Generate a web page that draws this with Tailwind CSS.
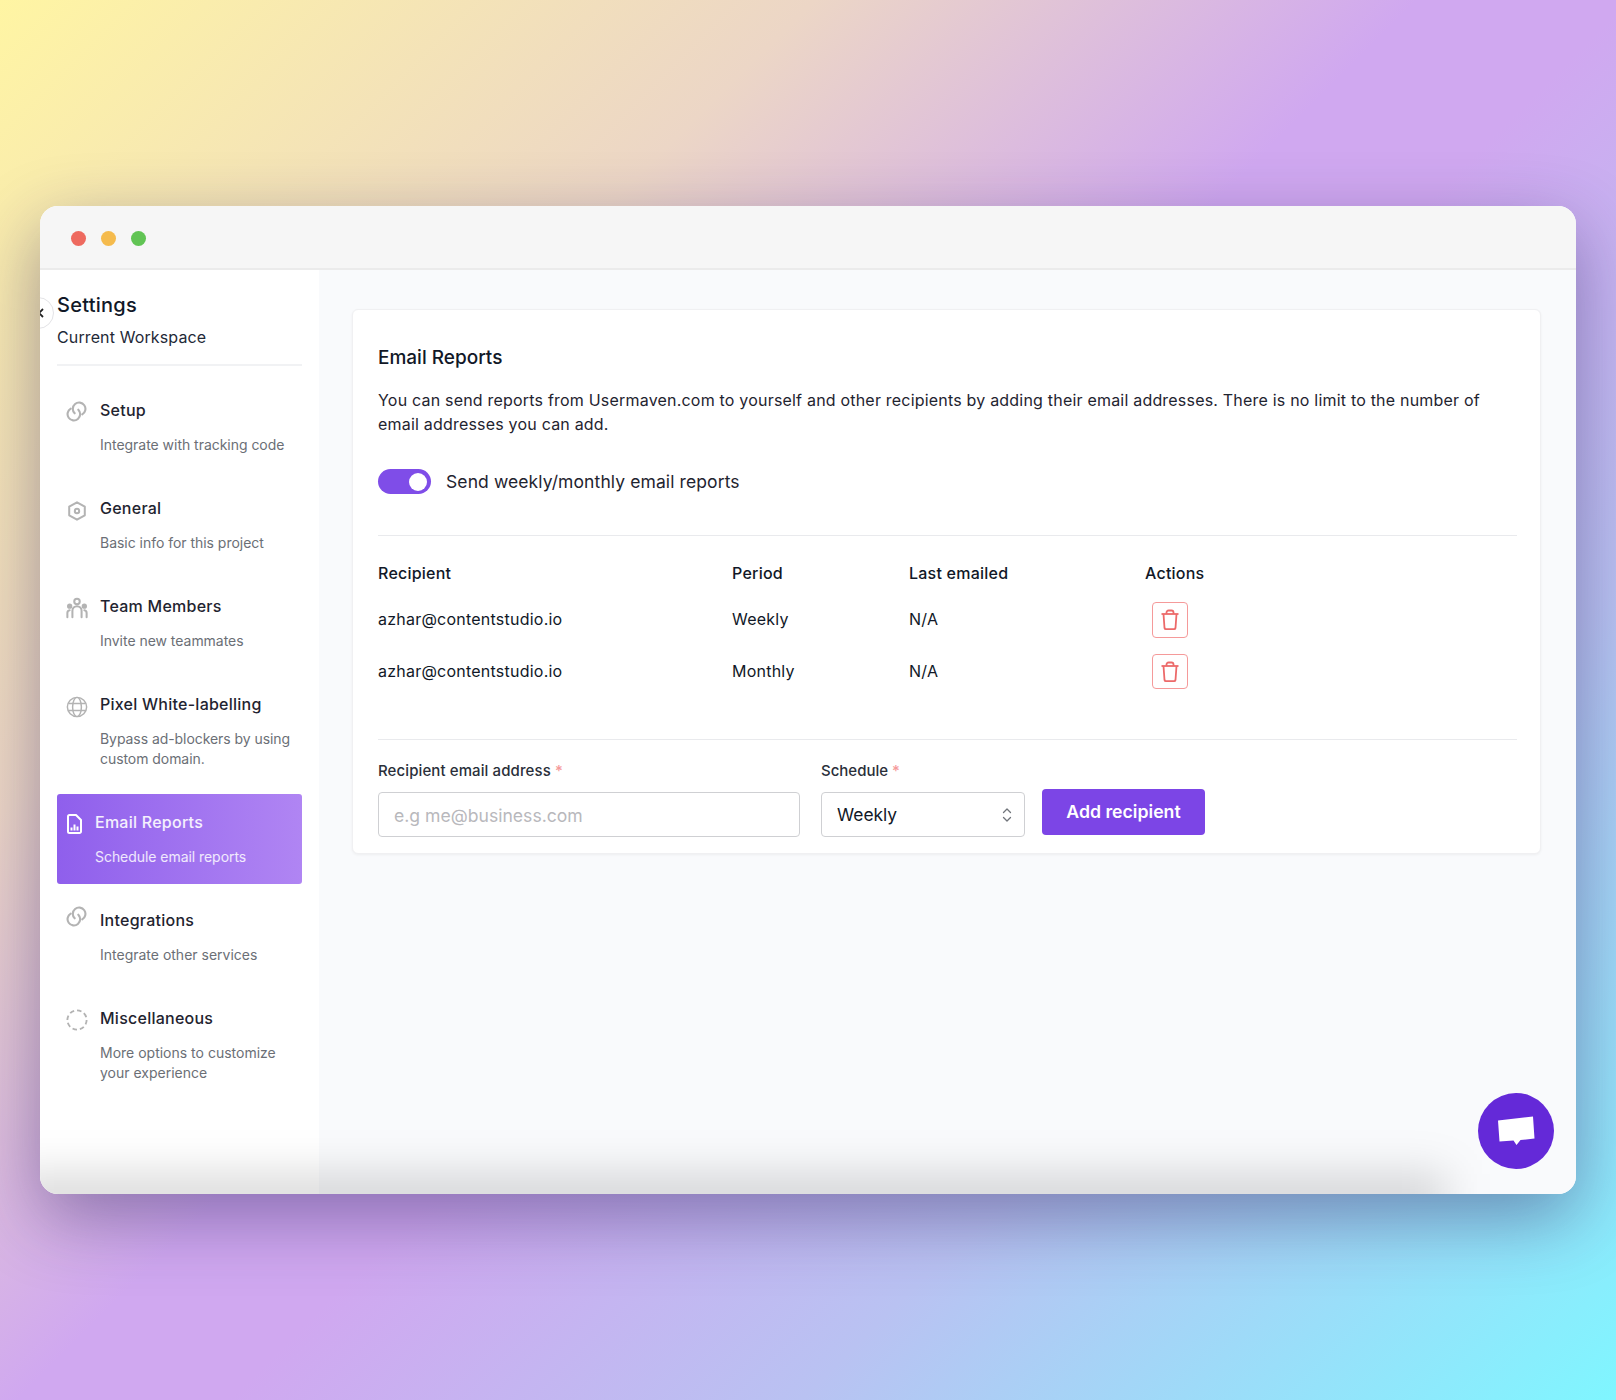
<!DOCTYPE html>
<html lang="en">
<head>
    <meta charset="UTF-8">
    <title>Settings - Email Reports</title>
    <script src="https://cdn.jsdelivr.net/npm/@tailwindcss/browser@4"></script>
</head>
<body class="font-['Inter',sans-serif] text-[#111827]">
    <div class="w-[1616px] h-[1400px] px-[40px] pt-[206px] bg-[linear-gradient(135deg,#fff5a3_0%,#ecd6c6_27%,#d0a8f0_47%,#d0a8f0_54%,#b9c2f2_73%,#7ff6ff_100%)]">
        <!-- window -->
        <div class="relative w-[1536px] h-[988px] rounded-[18px] overflow-hidden bg-white shadow-[0_24px_70px_rgba(40,30,90,0.42)] flex flex-col">
            <div class="h-[64px] shrink-0 bg-[#f6f6f6] border-b-2 border-[#ebebeb] flex items-center gap-[15px] pl-[31px] pt-[2px]">
                <span class="w-[15px] h-[15px] rounded-full bg-[#ee6a5f]"></span>
                <span class="w-[15px] h-[15px] rounded-full bg-[#f5bb4d]"></span>
                <span class="w-[15px] h-[15px] rounded-full bg-[#61c454]"></span>
            </div>

            <div class="flex flex-1">
                <!-- sidebar -->
                <aside class="w-[279px] shrink-0 bg-white pl-[17px] pr-[17px] pt-[21px]">
                    <h1 class="text-[20px] leading-[28px] font-medium tracking-[0.25px]">Settings</h1>
                    <p class="text-[16px] leading-[24px] mt-[6px] text-[#1f2937] tracking-[0.12px]">Current Workspace</p>
                    <div class="h-[2px] bg-[#f1f2f4] mt-[15px] mb-[16px]"></div>

                    <div class="flex flex-col gap-[8px]">
                        <div class="flex pl-[9px] pt-[16px] pb-[17px] rounded-[3px]">
                            <svg class="w-[21px] h-[21px] mt-[3px] shrink-0 text-[#b3b3b3]" viewBox="0 0 20 20" fill="none" stroke="currentColor" stroke-width="2" stroke-linecap="round"><path d="M8.260 11.740A6 6 0 1 1 15.500 12.700"/><path d="M11.740 8.260A6 6 0 1 1 4.500 7.300"/></svg>
                            <div class="ml-[13px]">
                                <div class="text-[16px] leading-[24px] font-medium text-[#1f2430] tracking-[0.25px]">Setup</div>
                                <div class="text-[14px] leading-[20px] mt-[13px] text-[#6b6f76] font-normal tracking-[-0.03px]">Integrate with tracking code</div>
                            </div>
                        </div>
                        <div class="flex pl-[9px] pt-[16px] pb-[17px] rounded-[3px]">
                            <svg class="w-[22px] h-[22px] mt-[4px] shrink-0 text-[#b3b3b3]" viewBox="0 0 24 24" fill="none" stroke="currentColor" stroke-width="2.200" stroke-linejoin="round"><path d="M12 2.500l8.500 4.800v9.400L12 21.500l-8.500-4.800V7.300z"/><circle cx="12" cy="12" r="2.400"/></svg>
                            <div class="ml-[12px]">
                                <div class="text-[16px] leading-[24px] font-medium text-[#1f2430] tracking-[0.25px]">General</div>
                                <div class="text-[14px] leading-[20px] mt-[13px] text-[#6b6f76] tracking-[-0.03px]">Basic info for this project</div>
                            </div>
                        </div>
                        <div class="flex pl-[9px] pt-[16px] pb-[17px] rounded-[3px]">
                            <svg class="w-[22px] h-[22px] mt-[3px] shrink-0 text-[#b3b3b3]" viewBox="0 0 24 24" fill="none" stroke="currentColor" stroke-width="2.200" stroke-linecap="round"><circle cx="12" cy="5" r="3"/><circle cx="4" cy="10" r="1.800" fill="currentColor"/><circle cx="20" cy="10" r="1.800" fill="currentColor"/><path d="M7 22v-7a5 5 0 0 1 10 0v7"/><path d="M1.500 22v-4.500a3 3 0 0 1 2.500-3"/><path d="M22.500 22v-4.500a3 3 0 0 0-2.500-3"/></svg>
                            <div class="ml-[12px]">
                                <div class="text-[16px] leading-[24px] font-medium text-[#1f2430] tracking-[0.25px]">Team Members</div>
                                <div class="text-[14px] leading-[20px] mt-[13px] text-[#6b6f76] tracking-[-0.03px]">Invite new teammates</div>
                            </div>
                        </div>
                        <div class="flex pl-[9px] pt-[16px] pb-[17px] rounded-[3px]">
                            <svg class="w-[22px] h-[22px] mt-[4px] shrink-0 text-[#b3b3b3]" viewBox="0 0 24 24" fill="none" stroke="currentColor" stroke-width="1.600"><circle cx="12" cy="12" r="10.500"/><ellipse cx="12" cy="12" rx="4.800" ry="10.500"/><path d="M2.500 8.200h19M2.500 15.800h19"/></svg>
                            <div class="ml-[12px]">
                                <div class="text-[16px] leading-[24px] font-medium text-[#1f2430] tracking-[0.25px]">Pixel White-labelling</div>
                                <div class="text-[14px] leading-[20px] mt-[13px] text-[#6b6f76] tracking-[-0.06px]">Bypass ad-blockers by using custom domain.</div>
                            </div>
                        </div>
                        <div class="flex pl-[10px] pt-[16px] pb-[17px] rounded-[3px] bg-[linear-gradient(90deg,#8f5fec,#b085f3)]">
                            <svg class="w-[15px] h-[20px] mt-[4px] shrink-0 text-white" viewBox="0 0 15 20" fill="none"><path d="M2.500 1h6.500l5 5v11.500a1.500 1.500 0 0 1-1.500 1.500h-10A1.500 1.500 0 0 1 1 17.500v-15A1.500 1.500 0 0 1 2.500 1z" stroke="currentColor" stroke-width="2" stroke-linejoin="round"/><path d="M4.500 16.500v-3M7.500 16.500v-6M10.500 16.500v-4" stroke="currentColor" stroke-width="2"/></svg>
                            <div class="ml-[13px]">
                                <div class="text-[16px] leading-[24px] font-medium text-white/90 tracking-[0.25px]">Email Reports</div>
                                <div class="text-[14px] leading-[20px] mt-[13px] text-white/85 tracking-[-0.05px]">Schedule email reports</div>
                            </div>
                        </div>
                        <div class="flex pl-[9px] pt-[16px] pb-[17px] rounded-[3px]">
                            <svg class="w-[21px] h-[21px] mt-[-2px] shrink-0 text-[#b3b3b3]" viewBox="0 0 20 20" fill="none" stroke="currentColor" stroke-width="2" stroke-linecap="round"><path d="M8.260 11.740A6 6 0 1 1 15.500 12.700"/><path d="M11.740 8.260A6 6 0 1 1 4.500 7.300"/></svg>
                            <div class="ml-[13px]">
                                <div class="text-[16px] leading-[24px] font-medium text-[#1f2430] tracking-[0.25px]">Integrations</div>
                                <div class="text-[14px] leading-[20px] mt-[13px] text-[#6b6f76]">Integrate other services</div>
                            </div>
                        </div>
                        <div class="flex pl-[9px] pt-[16px] pb-[17px] rounded-[3px]">
                            <svg class="w-[22px] h-[22px] mt-[3px] shrink-0 text-[#b3b3b3]" viewBox="0 0 24 24" fill="none" stroke="currentColor" stroke-width="2" stroke-dasharray="5 3.200"><circle cx="12" cy="12" r="10.500"/></svg>
                            <div class="ml-[12px]">
                                <div class="text-[16px] leading-[24px] font-medium text-[#1f2430] tracking-[0.25px]">Miscellaneous</div>
                                <div class="text-[14px] leading-[20px] mt-[13px] text-[#6b6f76]">More options to customize your experience</div>
                            </div>
                        </div>
                    </div>
                </aside>

                <!-- main -->
                <main class="flex-1 bg-[#f9fafc] pl-[33px] pr-[35px] pt-[39px]">
                    <div class="bg-white rounded-[6px] border border-[#f0f0f2] shadow-[0_1px_3px_rgba(0,0,0,0.05)] pl-[25px] pr-[23px] pt-[34px] pb-[16px]">
                        <h2 class="text-[19px] leading-[28px] font-medium">Email Reports</h2>
                        <p class="text-[16px] leading-[24px] mt-[16px] text-[#1f2430] tracking-[0.2px]">You can send reports from Usermaven.com to yourself and other recipients by adding their email addresses. There is no limit to the number of email addresses you can add.</p>

                        <div class="flex items-center mt-[33px]">
                            <div class="w-[53px] h-[25px] rounded-full bg-[#7f4de8] flex items-center justify-end pr-[4px]">
                                <span class="w-[18px] h-[18px] rounded-full bg-white"></span>
                            </div>
                            <span class="ml-[15px] text-[17.5px] leading-[24px] text-[#1f2430] tracking-[0.1px]">Send weekly/monthly email reports</span>
                        </div>

                        <div class="h-px bg-[#e9eaed] mt-[41px]"></div>

                        <div class="grid grid-cols-[354px_177px_236px_1fr] items-center mt-[25px] text-[16px] leading-[24px] text-[#111827] tracking-[0.23px]">
                            <div class="font-medium">Recipient</div>
                            <div class="font-medium">Period</div>
                            <div class="font-medium">Last emailed</div>
                            <div class="font-medium">Actions</div>

                            <div class="mt-[17px] pb-[2px]">azhar@contentstudio.io</div>
                            <div class="mt-[17px] pb-[2px]">Weekly</div>
                            <div class="mt-[17px] pb-[2px]">N/A</div>
                            <div class="mt-[17px]">
                                <button class="w-[36px] h-[36px] ml-[7px] rounded-[4px] border border-[#f59a9a] flex items-center justify-center text-[#ec6a6a]">
                                    <svg class="w-[20px] h-[22px]" viewBox="0 0 20 22" fill="none" stroke="currentColor" stroke-width="1.800" stroke-linejoin="round"><path d="M1.500 5h17"/><path d="M6.500 5V3.500a2 2 0 0 1 2-2h3a2 2 0 0 1 2 2V5"/><path d="M3.500 5l1 14a1.500 1.500 0 0 0 1.500 1.200h8a1.500 1.500 0 0 0 1.500-1.200l1-14"/></svg>
                                </button>
                            </div>

                            <div class="mt-[16px] pb-[2px]">azhar@contentstudio.io</div>
                            <div class="mt-[16px] pb-[2px]">Monthly</div>
                            <div class="mt-[16px] pb-[2px]">N/A</div>
                            <div class="mt-[16px]">
                                <button class="w-[36px] h-[35px] ml-[7px] rounded-[4px] border border-[#f59a9a] flex items-center justify-center text-[#ec6a6a]">
                                    <svg class="w-[20px] h-[22px]" viewBox="0 0 20 22" fill="none" stroke="currentColor" stroke-width="1.800" stroke-linejoin="round"><path d="M1.500 5h17"/><path d="M6.500 5V3.500a2 2 0 0 1 2-2h3a2 2 0 0 1 2 2V5"/><path d="M3.500 5l1 14a1.500 1.500 0 0 0 1.500 1.200h8a1.500 1.500 0 0 0 1.500-1.200l1-14"/></svg>
                                </button>
                            </div>
                        </div>

                        <div class="h-px bg-[#e9eaed] mt-[50px]"></div>

                        <div class="flex items-end mt-[21px]">
                            <div class="w-[422px]">
                                <label class="block text-[15px] leading-[20px] font-medium text-[#2a2f3a] tracking-[0.1px]">Recipient email address <span class="text-[#f59a9a]">*</span></label>
                                <input type="text" placeholder="e.g me@business.com" class="mt-[11px] w-full h-[45px] pl-[15px] pr-[15px] pt-[2px] text-[17.6px] bg-white border border-[#cfd0d3] rounded-[4px] placeholder:text-[#b8b8bc]">
                            </div>
                            <div class="w-[204px] ml-[21px]">
                                <label class="block text-[15px] leading-[20px] font-medium text-[#2a2f3a]">Schedule <span class="text-[#f59a9a]">*</span></label>
                                <div class="relative mt-[11px]">
                                    <select class="w-full h-[45px] pl-[15px] pt-[2px] text-[17.4px] bg-white border border-[#cfd0d3] rounded-[4px] appearance-none text-[#111827]">
                                        <option>Weekly</option>
                                        <option>Monthly</option>
                                    </select>
                                    <svg class="absolute right-[13px] top-[16px] w-[10px] h-[14px] text-[#70747a]" viewBox="0 0 10 14" fill="none" stroke="currentColor" stroke-width="1.300" stroke-linecap="round" stroke-linejoin="round"><path d="M1.500 4.500L5 1l3.500 3.500"/><path d="M1.500 9.500L5 13l3.500-3.500"/></svg>
                                </div>
                            </div>
                            <button class="w-[163px] h-[46px] ml-[17px] mb-[2px] rounded-[4px] bg-[#7c45e6] text-white text-[17.7px] font-semibold">Add recipient</button>
                        </div>
                    </div>
                </main>
            </div>

            <!-- back button cut by the window edge -->
            <div class="absolute left-[-18px] top-[91px] w-[32px] h-[32px] rounded-full bg-white border border-[#e3e3e6] flex items-center justify-end pr-[9px]">
                <svg class="w-[6px] h-[10px] text-[#222]" viewBox="0 0 6 10" fill="none" stroke="currentColor" stroke-width="1.800"><path d="M5 1L1 5l4 4"/></svg>
            </div>

            <!-- grey fade along the bottom -->
            <div class="absolute left-[-30px] right-[130px] bottom-[-30px] h-[50px] bg-black/15 blur-[22px] pointer-events-none"></div>

            <!-- chat bubble -->
            <button class="absolute left-[1438px] top-[887px] w-[76px] h-[76px] rounded-full bg-[#6429d8] flex items-center justify-center">
                <svg class="w-[38px] h-[32px] text-white" viewBox="0 0 38 32" fill="currentColor"><path d="M1 5.500L36 1.500l1.500 22-14 1.500-4 5-3-4.500-14 1z"/></svg>
            </button>
        </div>
    </div>
</body>
</html>
